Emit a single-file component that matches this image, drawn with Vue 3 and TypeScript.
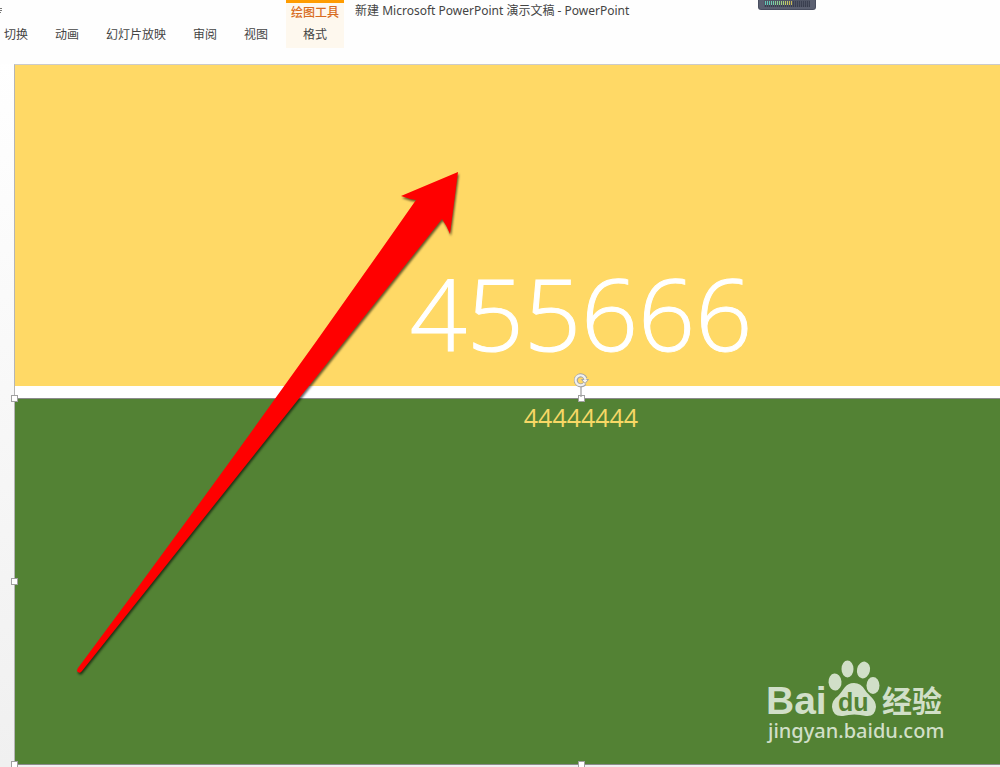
<script setup lang="ts">
const tabs: string[] = ['切换', '动画', '幻灯片放映', '审阅', '视图']
const handles: string[] = ['top-left', 'top', 'left', 'bottom-left', 'bottom']
const meterBars: number[] = Array.from({ length: 23 }, (_, i) => i)
const meterColors: string[] = ['#62c5b5', '#72cbad', '#8ace91', '#a5cf7b', '#c0c866', '#c9b956']

function barColor(i: number): string {
  return i < 14 ? meterColors[Math.min(5, Math.floor(i / 2.4))] : '#3b4051'
}
</script>

<template>
  <div class="window">
    <header class="ribbon">
      <nav class="tabs">
        <button v-for="tab in tabs" :key="tab" type="button" class="tab">{{ tab }}</button>
      </nav>
      <div class="context">
        <span class="context-title">绘图工具</span>
        <button type="button" class="tab">格式</button>
      </div>
      <h1 class="document-title">新建 Microsoft PowerPoint 演示文稿 - PowerPoint</h1>
      <svg class="clipped-mark" width="4" height="16" viewBox="0 0 4 16" aria-hidden="true">
        <path d="M0 8.500H2M0 10.500H2M0 12.500H1" stroke="#777" fill="none" />
      </svg>
      <svg class="meter" width="58" height="11" viewBox="0 0 58 11" aria-hidden="true">
        <path d="M0 0H58V7Q58 10 55 10H3Q0 10 0 7Z" fill="#494e5f" />
        <path d="M1 0V7Q1 9 3 9H55Q57 9 57 7V0" fill="#5b6071" />
        <rect x="6" y="0" width="46" height="7" fill="#505565" />
        <rect v-for="i in meterBars" :key="i" :x="7 + i * 2" y="1" width="1" height="4" :fill="barColor(i)" />
        <rect v-for="i in meterBars" :key="'s' + i" :x="7 + i * 2" y="5" width="1" height="2" fill="#383d4d" />
      </svg>
    </header>

    <main class="workspace">
      <div class="slide">
        <section class="title-shape">455666</section>
        <section class="subtitle-shape">
          44444444
          <span v-for="h in handles" :key="h" class="handle" :class="h"></span>
          <svg class="rotate" width="18" height="24" viewBox="0 0 18 24" aria-hidden="true">
            <path d="M9 14V24" stroke="#a3a3a3" stroke-width="1.300" />
            <path d="M12.800 10.500A5 5 0 1 1 13.500 5.500" fill="none" stroke="#a5a5a5" stroke-width="4" />
            <path d="M9.500 6.500H16.500L13 10.500Z" fill="#f5f5f5" stroke="#a5a5a5" stroke-width="1" />
            <path d="M12.500 10.300A5 5 0 1 1 13.500 6.800" fill="none" stroke="#f1f1f1" stroke-width="2.200" />
          </svg>
        </section>
      </div>
    </main>

    <svg class="arrow" width="400" height="520" viewBox="70 160 400 520" aria-hidden="true">
      <path
        d="M78 668Q254 432 416 200Q409 199 401 196L458 172L450 234Q447 226 442 219L82 671Q80 674 78 672Q76 671 78 668Z"
        fill="#ff0000"
      />
    </svg>

    <svg class="watermark" width="190" height="95" viewBox="762 655 190 95" role="img" aria-label="Baidu 经验">
      <g fill="#d1dfc8">
        <text x="766" y="714" class="brand">Bai</text>
        <ellipse cx="835" cy="682" rx="6.500" ry="8.500" transform="rotate(-5 835 682)" />
        <ellipse cx="847.500" cy="669" rx="6" ry="8.500" />
        <ellipse cx="863.500" cy="670" rx="6.500" ry="8.500" transform="rotate(12 863.500 670)" />
        <ellipse cx="873" cy="685.500" rx="6.500" ry="8.500" />
        <path d="M854 683Q861 683 865 690C869 696 876 699 876 707Q875 717 866 716Q854 713 843 716Q833 717 832 707Q832 700 838 696C844 690 845 683 854 683Z" />
        <text x="882" y="712" class="brand-cn">经验</text>
        <text x="768" y="738" class="address">jingyan.baidu.com</text>
      </g>
      <text x="838" y="711" class="paw-text" fill="#538234">du</text>
    </svg>
  </div>
</template>

<style>
body {
  margin: 0;
}
</style>

<style scoped>
.window {
  position: relative;
  display: flex;
  flex-direction: column;
  min-height: 100vh;
  overflow: hidden;
  background: linear-gradient(#ffffff 60px, #f0f0f0 100%);
  color: #444444;
  font-family: "Noto Sans", "Noto Sans CJK SC", sans-serif;
  font-size: 12px;
}

.ribbon {
  display: flex;
  align-items: flex-start;
  height: 64px;
  background: #fefefe;
}

.tabs {
  display: flex;
  gap: 27px;
  padding: 25px 18px 0 4px;
}

.tab {
  padding: 0;
  border: 0;
  background: none;
  color: #444444;
  font-family: "Noto Sans CJK SC", sans-serif;
  font-size: 12px;
  line-height: 18px;
  white-space: nowrap;
}

.context {
  display: flex;
  flex-direction: column;
  align-items: center;
  gap: 5px;
  box-sizing: border-box;
  width: 58px;
  height: 48px;
  border-top: 3px solid #ff9c00;
  background: #fef8ee;
}

.context-title {
  color: #d86b20;
  font-family: "Noto Sans CJK SC", sans-serif;
  font-weight: 500;
  line-height: 17px;
  white-space: nowrap;
}

.document-title {
  margin: 2px 0 0 11px;
  font-size: 12px;
  font-weight: 400;
  line-height: 18px;
  white-space: nowrap;
}

.clipped-mark {
  position: absolute;
  top: 0;
  left: 0;
}

.meter {
  position: absolute;
  top: 0;
  right: 184px;
}

.workspace {
  display: flex;
  flex: 1;
  padding: 0 0 2px 14px;
}

.slide {
  display: grid;
  flex: 1;
  grid-template-rows: 321fr 367fr;
  row-gap: 12px;
  margin-right: -147px;
  border-top: 1px solid #cbcbcb;
  border-left: 1px solid #b5b5b5;
  background: #ffffff;
}

.title-shape {
  display: flex;
  align-items: flex-end;
  justify-content: center;
  box-sizing: border-box;
  padding-bottom: 14px;
  background: #ffd966;
  color: #ffffff;
  font-family: "Open Sans", sans-serif;
  font-size: 100px;
  font-weight: 300;
  line-height: 120px;
  -webkit-text-stroke: 1px #ffffff;
}

.subtitle-shape {
  position: relative;
  box-sizing: border-box;
  padding-top: 2px;
  border-top: 1px solid #8b8b8b;
  border-bottom: 1px solid #8b8b8b;
  background: #538234;
  color: #f7d866;
  font-family: "Open Sans", sans-serif;
  font-size: 25px;
  font-weight: 500;
  line-height: 32px;
  text-align: center;
}

.handle {
  position: absolute;
  box-sizing: border-box;
  width: 7px;
  height: 7px;
  border: 1px solid #a0a0a0;
  background: #ffffff;
}

.top-left {
  top: -4px;
  left: -4px;
}

.top {
  top: -4px;
  left: calc(50% - 3px);
}

.left {
  top: calc(50% - 4px);
  left: -4px;
}

.bottom-left {
  bottom: -4px;
  left: -4px;
}

.bottom {
  bottom: -4px;
  left: calc(50% - 3px);
}

.rotate {
  position: absolute;
  top: -26px;
  left: calc(50% - 9px);
}

.arrow {
  position: absolute;
  top: 160px;
  left: 70px;
  filter: drop-shadow(1px 2px 1px rgba(0, 0, 0, 0.6));
  pointer-events: none;
}

.watermark {
  position: absolute;
  right: 48px;
  bottom: 17px;
}

.brand {
  font-family: "Liberation Sans", sans-serif;
  font-size: 39px;
  font-weight: 700;
}

.brand-cn {
  font-family: "Noto Sans CJK SC", sans-serif;
  font-size: 30px;
  font-weight: 700;
}

.paw-text {
  font-family: "Liberation Sans", sans-serif;
  font-size: 25px;
  font-weight: 700;
}

.address {
  font-family: "Noto Sans", sans-serif;
  font-size: 20px;
  font-weight: 500;
}
</style>
